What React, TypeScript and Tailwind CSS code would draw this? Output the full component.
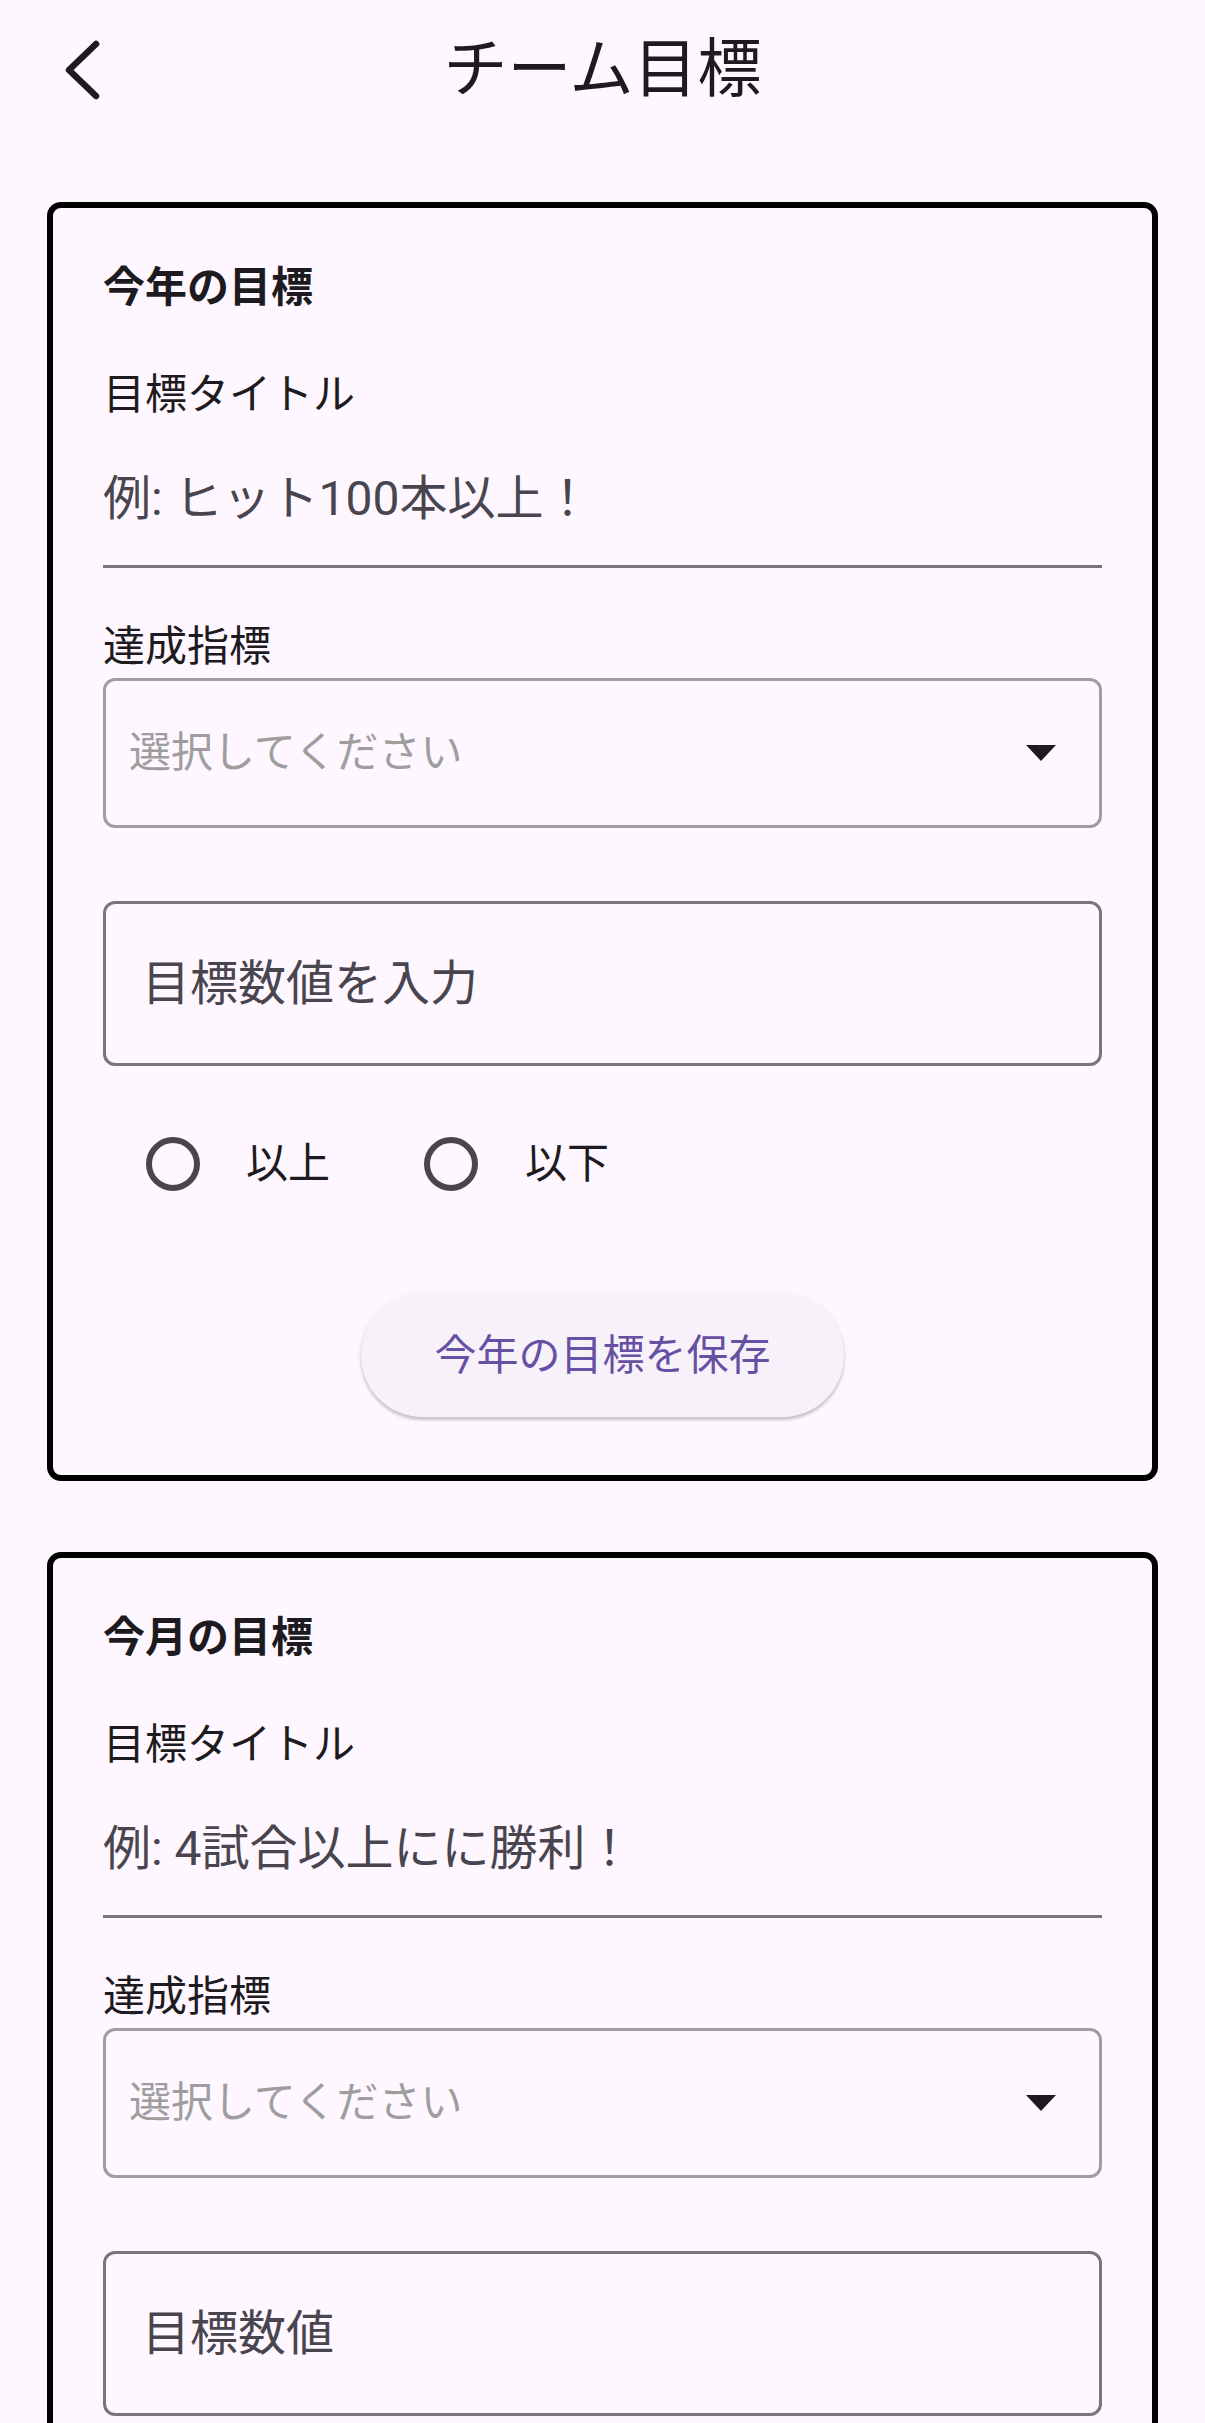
import React from "react";

function Radio() {
  return (
    <span className="block w-[54px] h-[54px] rounded-full border-[6px] border-[#49454F] shrink-0" />
  );
}

function GoalCard({
  heading,
  hint,
  valueHint,
  button,
}: {
  heading: string;
  hint: string;
  valueHint: string;
  button?: string;
}) {
  return (
    <div
      className={
        button
          ? "mx-[47px] rounded-[14px] border-[6px] border-black px-[50px] pt-[59px] pb-[58px]"
          : "mx-[47px] rounded-[14px] border-[6px] border-black px-[50px] pt-[59px] pb-[300px]"
      }
    >
      <div className="text-[42px] leading-[42px] font-bold text-[#1D1B20]">{heading}</div>
      <div className="mt-[65px] text-[42px] leading-[42px] text-[#1D1B20]">目標タイトル</div>
      <div className="pt-[59px] pb-[42px] border-b-[3px] border-[#79747E] text-[48px] leading-[48px] text-[#49454F]">
        {hint}
      </div>
      <div className="mt-[58px] text-[42px] leading-[42px] text-[#1D1B20]">達成指標</div>
      <div className="mt-[10px] h-[150px] rounded-[12px] border-[3px] border-[#9E9E9E] flex items-center justify-between pl-[23px] pr-[43px]">
        <span className="text-[42px] leading-[42px] text-[#9E9E9E]">選択してください</span>
        <svg width="30" height="16" viewBox="0 0 30 16" className="shrink-0">
          <polygon points="0,0 30,0 15,16" fill="#1D1B20" />
        </svg>
      </div>
      <div className="mt-[73px] h-[165px] rounded-[12px] border-[3px] border-[#79747E] flex items-center pl-[36px] text-[48px] leading-[48px] text-[#49454F]">
        {valueHint}
      </div>
      {button && (
        <>
          <div className="mt-[71px] flex items-center h-[54px] pl-[43px]">
            <Radio />
            <span className="ml-[46px] text-[42px] leading-[42px] text-[#1D1B20]">以上</span>
            <span className="ml-[94px]">
              <Radio />
            </span>
            <span className="ml-[47px] text-[42px] leading-[42px] text-[#1D1B20]">以下</span>
          </div>
          <div className="mt-[103px] flex justify-center">
            <button className="h-[123px] w-[483px] rounded-full bg-[#F7F2FA] shadow-[0_3px_3px_rgba(0,0,0,0.18),0_1px_6px_rgba(0,0,0,0.08)] text-[42px] leading-[42px] text-[#6750A4]">
              {button}
            </button>
          </div>
        </>
      )}
    </div>
  );
}

export default function App() {
  return (
    <div className="w-full h-[2423px] overflow-hidden bg-[#FEF7FF] font-[Roboto,'Noto_Sans_CJK_JP',sans-serif]">
      <header className="h-[140px] grid grid-cols-[1fr_auto_1fr] items-center">
        <div className="pl-[64px] flex items-center">
          <svg width="40" height="62" viewBox="0 0 40 62">
            <polyline
              points="32,5 5,31 32,57"
              fill="none"
              stroke="#1D1B20"
              strokeWidth="6.5"
              strokeLinecap="round"
              strokeLinejoin="round"
            />
          </svg>
        </div>
        <h1 className="text-[64px] leading-[64px] text-[#1D1B20] font-normal">チーム目標</h1>
        <div />
      </header>
      <div className="mt-[62px]">
        <GoalCard
          heading="今年の目標"
          hint="例: ヒット100本以上！"
          valueHint="目標数値を入力"
          button="今年の目標を保存"
        />
      </div>
      <div className="mt-[71px]">
        <GoalCard heading="今月の目標" hint="例: 4試合以上にに勝利！" valueHint="目標数値" />
      </div>
    </div>
  );
}
